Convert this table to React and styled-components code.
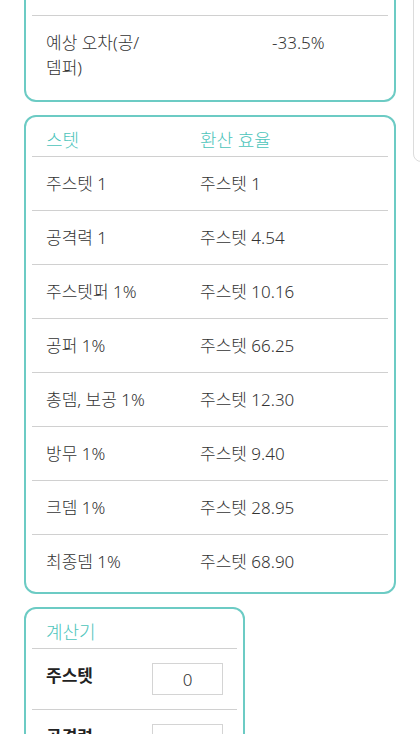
import React from "react";
import styled, { createGlobalStyle } from "styled-components";

const GlobalStyle = createGlobalStyle`
  html, body {
    margin: 0;
    padding: 0;
    background: #ffffff;
    overflow-x: hidden;
  }
  body {
    font-family: "Noto Sans", "Noto Sans CJK KR", sans-serif;
    font-weight: 300;
    color: #333333;
  }
`;

const efficiency = [
  { stat: "주스텟 1", value: "주스텟 1" },
  { stat: "공격력 1", value: "주스텟 4.54" },
  { stat: "주스텟퍼 1%", value: "주스텟 10.16" },
  { stat: "공퍼 1%", value: "주스텟 66.25" },
  { stat: "총뎀, 보공 1%", value: "주스텟 12.30" },
  { stat: "방무 1%", value: "주스텟 9.40" },
  { stat: "크뎀 1%", value: "주스텟 28.95" },
  { stat: "최종뎀 1%", value: "주스텟 68.90" },
];

const calcFields = ["주스텟", "공격력", "주스텟퍼", "공퍼"];

const App = () => {
  return (
    <Page>
      <GlobalStyle />
      <Main>
        <Card tail="6px">
          <Row>
            <Cell width="226px">예상 오차(공/크뎀)</Cell>
            <Cell>-12.0%</Cell>
          </Row>
          <Row last>
            <Cell width="226px">
              예상 오차(공/
              <br />
              뎀퍼)
            </Cell>
            <Cell>-33.5%</Cell>
          </Row>
        </Card>

        <Card>
          <HeadRow>
            <HeadCell width="154px">스텟</HeadCell>
            <HeadCell>환산 효율</HeadCell>
          </HeadRow>
          {efficiency.map((item, i) => (
            <Row key={item.stat} last={i === efficiency.length - 1}>
              <Cell width="154px">{item.stat}</Cell>
              <Cell>{item.value}</Cell>
            </Row>
          ))}
        </Card>

        <CalcCard>
          <HeadRow>
            <HeadCell>계산기</HeadCell>
          </HeadRow>
          {calcFields.map((f, i) => (
            <CalcRow key={f} last={i === calcFields.length - 1}>
              <CalcLabel>{f}</CalcLabel>
              <CalcInput defaultValue="0" />
            </CalcRow>
          ))}
        </CalcCard>
      </Main>
      <Aside />
    </Page>
  );
};

export default App;

const Page = styled.div`
  display: flex;
  align-items: flex-start;
  margin-top: -40px;
  padding-left: 24px;
  width: 700px;
`;

const Main = styled.div`
  width: 372px;
  flex-shrink: 0;
  display: flex;
  flex-direction: column;
  gap: 13px;
`;

const Aside = styled.div`
  flex-shrink: 0;
  margin-left: 17px;
  width: 240px;
  height: 202px;
  box-sizing: border-box;
  border: 1px solid #dcdcdc;
  border-radius: 8px;
`;

const Card = styled.div`
  box-sizing: border-box;
  border: 2px solid #6ccbc4;
  border-radius: 12px;
  padding: 0 6px ${(p) => p.tail || "4px"};
  background: #fff;
`;

const CalcCard = styled(Card)`
  width: 221px;
`;

const HeadRow = styled.div`
  display: flex;
  border-bottom: 1px solid #d0d0d0;
  padding: 11px 0 4px;
`;

const HeadCell = styled.div`
  width: ${(p) => p.width || "auto"};
  flex-shrink: 0;
  padding-left: 14px;
  box-sizing: border-box;
  font-size: 18px;
  line-height: 24px;
  color: #4cc4bb;
`;

const Row = styled.div`
  display: flex;
  padding: 14px 0;
  border-bottom: ${(p) => (p.last ? "none" : "1px solid #d0d0d0")};
`;

const Cell = styled.div`
  width: ${(p) => p.width || "auto"};
  flex-shrink: 0;
  padding-left: 14px;
  box-sizing: border-box;
  font-size: 17px;
  line-height: 25px;
`;

const CalcRow = styled.div`
  display: flex;
  justify-content: space-between;
  align-items: flex-start;
  padding: 14px 14px;
  border-bottom: ${(p) => (p.last ? "none" : "1px solid #d0d0d0")};
`;

const CalcLabel = styled.div`
  font-size: 17px;
  line-height: 24px;
  font-weight: 700;
  color: #222;
  padding-top: 1px;
`;

const CalcInput = styled.input`
  width: 71px;
  height: 32px;
  box-sizing: border-box;
  border: 1px solid #d4d4d4;
  border-radius: 0;
  text-align: center;
  font-family: "Noto Sans", "Noto Sans CJK KR", sans-serif;
  font-size: 17px;
  font-weight: 300;
  color: #333;
  padding: 0;
  outline: none;
`;
